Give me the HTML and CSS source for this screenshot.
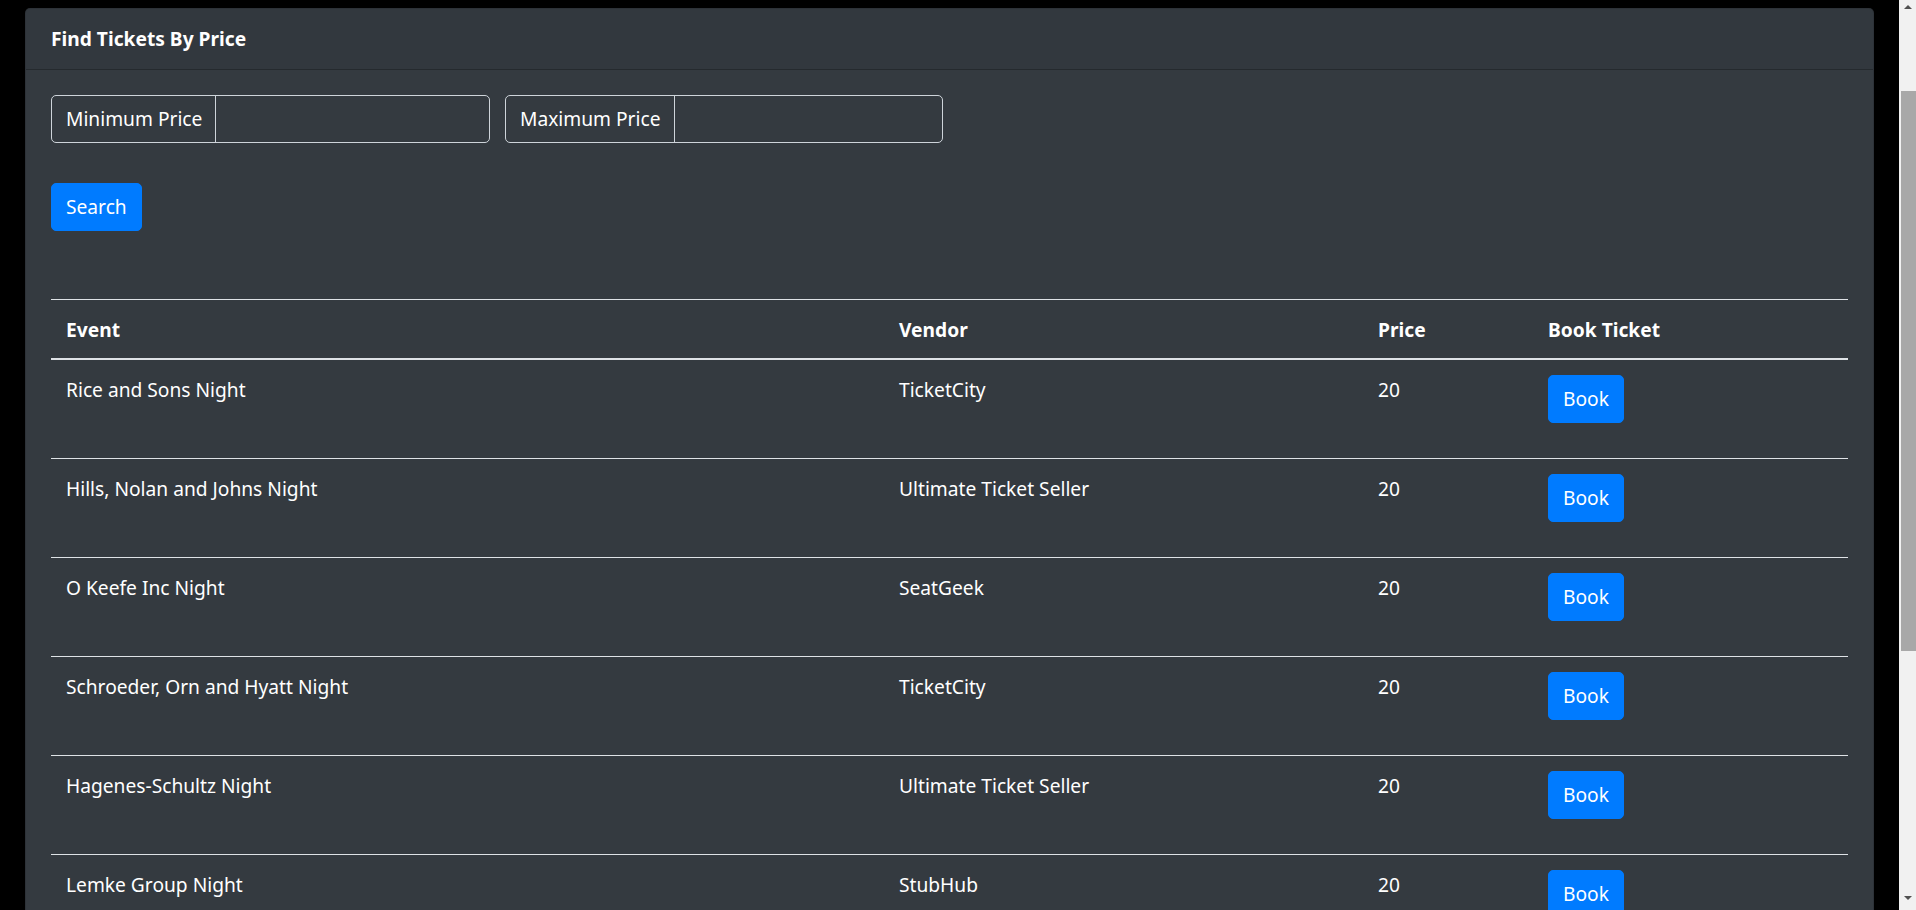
FILE: index.html
```html
<!DOCTYPE html>
<html lang="en">
<head>
<meta charset="utf-8">
<title>Find Tickets By Price</title>
<link rel="stylesheet" href="styles.css">
</head>
<body>
<div class="page">
  <div class="card">
    <div class="card-header">Find Tickets By Price</div>
    <div class="card-body">
      <form class="filters">
        <div class="input-group group-min">
          <span class="input-label">Minimum Price</span>
          <input class="input-field" type="text">
        </div>
        <div class="input-group group-max">
          <span class="input-label">Maximum Price</span>
          <input class="input-field" type="text">
        </div>
      </form>
      <button class="btn search-btn" type="button">Search</button>

      <table class="tickets">
        <colgroup>
          <col class="col-event">
          <col class="col-vendor">
          <col class="col-price">
          <col class="col-book">
        </colgroup>
        <thead>
          <tr><th>Event</th><th>Vendor</th><th>Price</th><th>Book Ticket</th></tr>
        </thead>
        <tbody>
          <tr><td>Rice and Sons Night</td><td>TicketCity</td><td>20</td><td><form class="book-form"><button class="btn" type="button">Book</button></form></td></tr>
          <tr><td>Hills, Nolan and Johns Night</td><td>Ultimate Ticket Seller</td><td>20</td><td><form class="book-form"><button class="btn" type="button">Book</button></form></td></tr>
          <tr><td>O Keefe Inc Night</td><td>SeatGeek</td><td>20</td><td><form class="book-form"><button class="btn" type="button">Book</button></form></td></tr>
          <tr><td>Schroeder, Orn and Hyatt Night</td><td>TicketCity</td><td>20</td><td><form class="book-form"><button class="btn" type="button">Book</button></form></td></tr>
          <tr><td>Hagenes-Schultz Night</td><td>Ultimate Ticket Seller</td><td>20</td><td><form class="book-form"><button class="btn" type="button">Book</button></form></td></tr>
          <tr><td>Lemke Group Night</td><td>StubHub</td><td>20</td><td><form class="book-form"><button class="btn" type="button">Book</button></form></td></tr>
        </tbody>
      </table>
    </div>
  </div>
</div>
<div class="scrollbar">
  <span class="arrow arrow-up"></span>
  <span class="thumb"></span>
  <span class="arrow arrow-down"></span>
</div>
</body>
</html>
```

FILE: styles.css
```css
html, body {
  margin: 0;
  padding: 0;
  height: 100%;
}
body {
  background: #000;
  color: #fff;
  font-family: "Noto Sans", "Open Sans", "Liberation Sans", sans-serif;
  font-size: 19.2px;
  line-height: 30px;
  overflow: hidden;
}
.page {
  margin-right: 17px;
  padding: 8px 25px 0 25px;
}
.card {
  background: #343a40;
  border: 1px solid rgba(0, 0, 0, 0.125);
  border-radius: 5px;
  min-height: 1200px;
}
.card-header {
  padding: 15px 25px;
  font-weight: 700;
  background: rgba(0, 0, 0, 0.03);
  border-bottom: 1px solid rgba(0, 0, 0, 0.25);
}
.card-body {
  padding: 25px;
}
.filters {
  display: flex;
  gap: 15px;
  margin: 0;
}
.input-group {
  display: flex;
  border: 1px solid #ced4da;
  border-radius: 5px;
  height: 46px;
}
.group-min { width: 437px; }
.group-max { width: 436px; }
.input-label {
  padding: 8px 13px 8px 14px;
  border-right: 1px solid #ced4da;
  white-space: nowrap;
}
.input-field {
  flex: 1;
  min-width: 0;
  background: transparent;
  border: 0;
  color: #fff;
  font: inherit;
  outline: none;
}
.btn {
  display: inline-block;
  background: #007bff;
  color: #fff;
  border: 1px solid #007bff;
  border-radius: 5px;
  font: inherit;
  line-height: 30px;
  padding: 8px 14px;
  cursor: pointer;
}
.search-btn {
  margin-top: 40px;
}
.tickets {
  margin-top: 68px;
  width: 100%;
  border-collapse: collapse;
}
.col-event { width: 833px; }
.col-vendor { width: 479px; }
.col-price { width: 170px; }
.tickets th,
.tickets td {
  padding: 15px;
  text-align: left;
  vertical-align: top;
  border-top: 1px solid #dee2e6;
}
.tickets th {
  font-weight: 700;
  padding-bottom: 13px;
  vertical-align: bottom;
  border-bottom: 2px solid #dee2e6;
}
.book-form {
  margin: 0 0 20px 0;
}
.scrollbar {
  position: fixed;
  top: 0;
  right: 0;
  width: 17px;
  height: 100%;
  background: #f1f1f1;
}
.thumb {
  position: absolute;
  left: 2px;
  right: 0;
  top: 91px;
  height: 560px;
  background: #a8a8a8;
}
.arrow {
  position: absolute;
  left: 5px;
  width: 0;
  height: 0;
  border-left: 4px solid transparent;
  border-right: 4px solid transparent;
}
.arrow-up {
  top: 5px;
  border-bottom: 4px solid #505050;
}
.arrow-down {
  bottom: 10px;
  border-top: 4px solid #505050;
}
```
